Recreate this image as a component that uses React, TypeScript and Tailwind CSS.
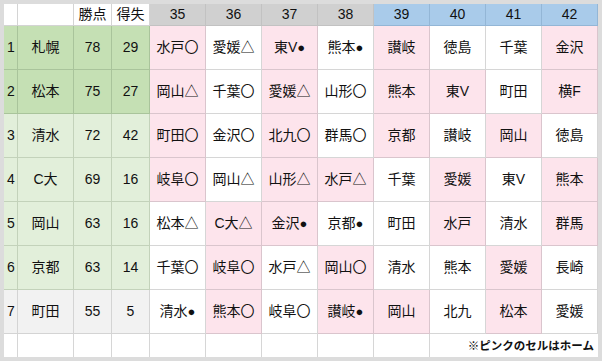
const ROUNDS = ['35', '36', '37', '38', '39', '40', '41', '42']

type Cell = [string, boolean]

const rows: { rank: number; team: string; pts: number; gd: number; tone: 'dark' | 'light' | 'gray'; games: Cell[] }[] = [
  {
    rank: 1, team: '札幌', pts: 78, gd: 29, tone: 'dark',
    games: [['水戸〇', true], ['愛媛△', false], ['東V●', true], ['熊本●', false], ['讃岐', true], ['徳島', false], ['千葉', false], ['金沢', true]],
  },
  {
    rank: 2, team: '松本', pts: 75, gd: 27, tone: 'dark',
    games: [['岡山△', true], ['千葉〇', false], ['愛媛△', true], ['山形〇', false], ['熊本', true], ['東V', true], ['町田', false], ['横F', true]],
  },
  {
    rank: 3, team: '清水', pts: 72, gd: 42, tone: 'light',
    games: [['町田〇', true], ['金沢〇', false], ['北九〇', true], ['群馬〇', false], ['京都', true], ['讃岐', false], ['岡山', true], ['徳島', false]],
  },
  {
    rank: 4, team: 'C大', pts: 69, gd: 16, tone: 'light',
    games: [['岐阜〇', true], ['岡山△', false], ['山形△', true], ['水戸△', true], ['千葉', false], ['愛媛', true], ['東V', false], ['熊本', true]],
  },
  {
    rank: 5, team: '岡山', pts: 63, gd: 16, tone: 'light',
    games: [['松本△', false], ['C大△', true], ['金沢●', true], ['京都●', false], ['町田', false], ['水戸', true], ['清水', false], ['群馬', true]],
  },
  {
    rank: 6, team: '京都', pts: 63, gd: 14, tone: 'light',
    games: [['千葉〇', false], ['岐阜〇', true], ['水戸△', false], ['岡山〇', true], ['清水', false], ['熊本', false], ['愛媛', true], ['長崎', false]],
  },
  {
    rank: 7, team: '町田', pts: 55, gd: 5, tone: 'gray',
    games: [['清水●', false], ['熊本〇', true], ['岐阜〇', false], ['讃岐●', true], ['岡山', true], ['北九', false], ['松本', true], ['愛媛', false]],
  },
]

const toneBg = {
  dark: 'bg-[#c5e0b4] border-[#a9c49b]',
  light: 'bg-[#e2efda] border-[#c3d2ba]',
  gray: 'bg-[#f2f2f2] border-[#d4d4d4]',
}

function GameText({ text }: { text: string }) {
  // the black dot sits a bit smaller than the kanji
  if (text.endsWith('●')) {
    return (
      <span>
        {text.slice(0, -1)}
        <span className="text-[13px]">●</span>
      </span>
    )
  }
  return <span>{text}</span>
}

export default function App() {
  const cell = 'flex items-center justify-center border-r border-b'
  return (
    <div className="w-[602px] h-[361px] bg-[#dcdcdc] p-[4px] text-[14px] text-[#111]" style={{ fontFamily: '"Liberation Sans", "Noto Sans CJK JP", sans-serif' }}>
      <div className="grid grid-cols-[14px_56px_38px_38px_repeat(8,56px)] grid-rows-[22px_repeat(7,44px)_23px] bg-white">
        <div className={`${cell} border-[#d4d4d4]`} />
        <div className={`${cell} border-[#d4d4d4]`} />
        <div className={`${cell} border-[#d4d4d4]`}>勝点</div>
        <div className={`${cell} border-[#d4d4d4]`}>得失</div>
        {ROUNDS.map((r, i) => (
          <div key={r} className={`${cell} ${i < 4 ? 'bg-[#d0d0d0] border-[#c2c2c2]' : 'bg-[#a9cbea] border-[#93b6d6]'}`}>
            {r}
          </div>
        ))}

        {rows.map((row) => (
          <div key={row.rank} className="contents">
            <div className={`flex items-center pl-[3px] border-r border-b ${toneBg[row.tone]}`}>{row.rank}</div>
            <div className={`${cell} ${toneBg[row.tone]}`}>{row.team}</div>
            <div className={`${cell} ${toneBg[row.tone]}`}>{row.pts}</div>
            <div className={`${cell} ${toneBg[row.tone]}`}>{row.gd}</div>
            {row.games.map(([text, home], i) => (
              <div key={i} className={`${cell} ${home ? 'bg-[#fde4ec] border-[#dac5cd]' : 'bg-white border-[#d6d6d6]'}`}>
                <GameText text={text} />
              </div>
            ))}
          </div>
        ))}

        {Array.from({ length: 9 }).map((_, i) => (
          <div key={i} className="border-r border-[#d6d6d6]" />
        ))}
        <div className="col-span-3 flex items-center justify-end pr-[4px] pt-[2px] text-[11.5px] font-bold">
          ※ピンクのセルはホーム
        </div>
      </div>
    </div>
  )
}
